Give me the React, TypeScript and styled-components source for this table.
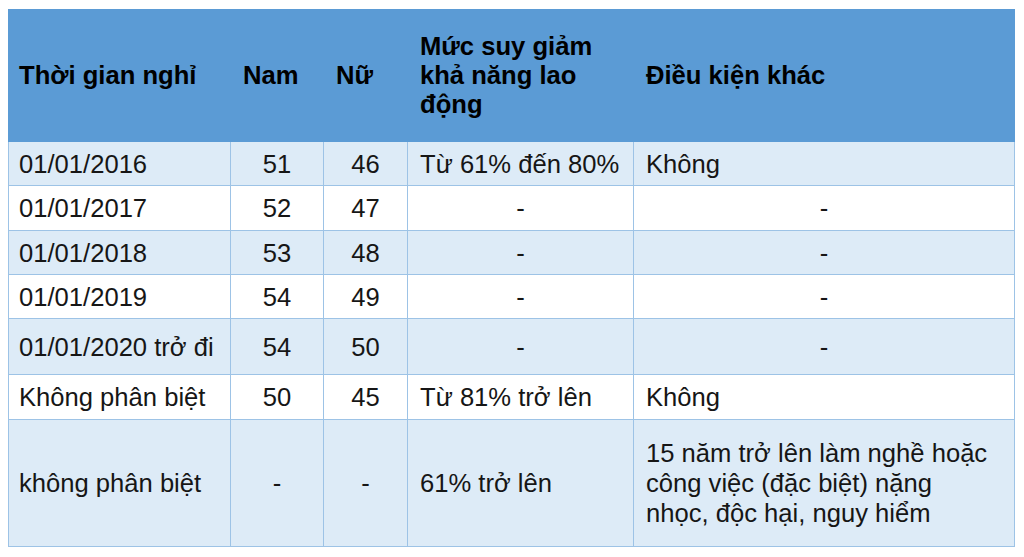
import React from "react";
import styled, { createGlobalStyle } from "styled-components";

const Global = createGlobalStyle`
  html, body { margin: 0; padding: 0; background: #ffffff; }
  body { font-family: "Liberation Sans", Arial, sans-serif; }
`;

const Page = styled.div`
  padding: 9px 10px 0 8px;
`;

const Table = styled.table`
  width: 1006px;
  border-collapse: collapse;
  table-layout: fixed;
  font-family: "Liberation Sans", Arial, sans-serif;
  font-size: 25.6px;
`;

const HeadRow = styled.tr`
  height: 132px;
  background: #5b9bd5;
`;

const HeadCell = styled.th`
  padding: 0 10px 0 12px;
  text-align: left;
  vertical-align: middle;
  font-weight: bold;
  line-height: 29px;
  color: #000000;
  border: 1px solid #5b9bd5;

  &:first-child {
    padding-left: 10px;
  }
`;

const Row = styled.tr<{ $shade: boolean; $h: number }>`
  height: ${(p) => p.$h}px;
  background: ${(p) => (p.$shade ? "#ddebf7" : "#ffffff")};
`;

const Cell = styled.td<{ $align?: "left" | "center" }>`
  padding: ${(p) => (p.$align === "center" ? "0 8px" : "0 8px 0 12px")};
  text-align: ${(p) => p.$align ?? "left"};
  vertical-align: middle;
  line-height: 30px;
  color: #161616;
  border: 1px solid #9dc3e6;

  &:first-child {
    padding-left: 10px;
  }

  &:last-child {
    padding-right: ${(p) => (p.$align === "center" ? "8px" : "16px")};
  }
`;

type RowData = {
  time: string;
  nam: string;
  nu: string;
  muc: string;
  dk: string;
  h: number;
};

const rows: RowData[] = [
  { time: "01/01/2016", nam: "51", nu: "46", muc: "Từ 61% đến 80%", dk: "Không", h: 44 },
  { time: "01/01/2017", nam: "52", nu: "47", muc: "-", dk: "-", h: 45 },
  { time: "01/01/2018", nam: "53", nu: "48", muc: "-", dk: "-", h: 44 },
  { time: "01/01/2019", nam: "54", nu: "49", muc: "-", dk: "-", h: 44 },
  { time: "01/01/2020 trở đi", nam: "54", nu: "50", muc: "-", dk: "-", h: 56 },
  { time: "Không phân biệt", nam: "50", nu: "45", muc: "Từ 81% trở lên", dk: "Không", h: 45 },
  {
    time: "không phân biệt",
    nam: "-",
    nu: "-",
    muc: "61% trở lên",
    dk: "15 năm trở lên làm nghề hoặc công việc (đặc biệt) nặng nhọc, độc hại, nguy hiểm",
    h: 127,
  },
];

const alignOf = (v: string): "left" | "center" => (v === "-" ? "center" : "left");

export default function App() {
  return (
    <Page>
      <Global />
      <Table>
        <colgroup>
          <col style={{ width: 222 }} />
          <col style={{ width: 93 }} />
          <col style={{ width: 84 }} />
          <col style={{ width: 226 }} />
          <col style={{ width: 381 }} />
        </colgroup>
        <thead>
          <HeadRow>
            <HeadCell>Thời gian nghỉ</HeadCell>
            <HeadCell>Nam</HeadCell>
            <HeadCell>Nữ</HeadCell>
            <HeadCell>Mức suy giảm khả năng lao động</HeadCell>
            <HeadCell>Điều kiện khác</HeadCell>
          </HeadRow>
        </thead>
        <tbody>
          {rows.map((r, i) => (
            <Row key={i} $shade={i % 2 === 0} $h={r.h}>
              <Cell>{r.time}</Cell>
              <Cell $align="center">{r.nam}</Cell>
              <Cell $align="center">{r.nu}</Cell>
              <Cell $align={alignOf(r.muc)}>{r.muc}</Cell>
              <Cell $align={alignOf(r.dk)}>{r.dk}</Cell>
            </Row>
          ))}
        </tbody>
      </Table>
    </Page>
  );
}
